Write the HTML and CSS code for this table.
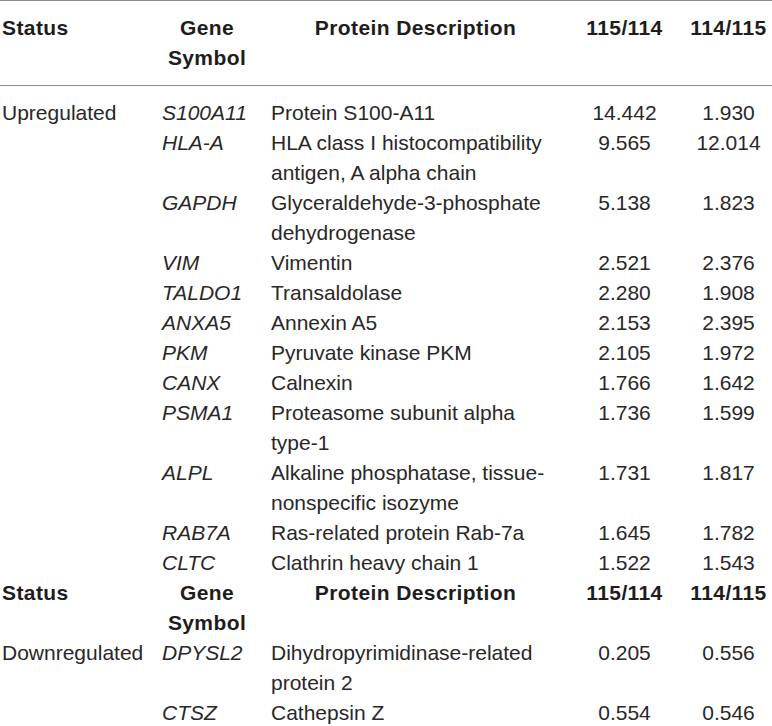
FILE: index.html
```html
<!DOCTYPE html>
<html lang="en">

<head>
  <meta charset="UTF-8" />
  <meta name="viewport" content="width=device-width, initial-scale=1.0" />
  <title>Protein Table</title>
  <link rel="stylesheet" href="styles.css">
</head>

<body>
  <table class="data-table">
    <colgroup>
      <col class="col-status">
      <col class="col-gene">
      <col class="col-desc">
      <col class="col-r1">
      <col class="col-r2">
    </colgroup>
    <thead>
      <tr>
        <th class="status">Status</th>
        <th class="gene">Gene Symbol</th>
        <th class="desc">Protein Description</th>
        <th class="num">115/114</th>
        <th class="num">114/115</th>
      </tr>
    </thead>
    <tbody>
      <tr class="first-row">
        <td class="status">Upregulated</td>
        <td class="gene">S100A11</td>
        <td class="desc">Protein S100-A11</td>
        <td class="num">14.442</td>
        <td class="num">1.930</td>
      </tr>
      <tr>
        <td class="status"></td>
        <td class="gene">HLA-A</td>
        <td class="desc">HLA class I histocompatibility antigen, A alpha chain</td>
        <td class="num">9.565</td>
        <td class="num">12.014</td>
      </tr>
      <tr>
        <td class="status"></td>
        <td class="gene">GAPDH</td>
        <td class="desc">Glyceraldehyde-3-phosphate dehydrogenase</td>
        <td class="num">5.138</td>
        <td class="num">1.823</td>
      </tr>
      <tr>
        <td class="status"></td>
        <td class="gene">VIM</td>
        <td class="desc">Vimentin</td>
        <td class="num">2.521</td>
        <td class="num">2.376</td>
      </tr>
      <tr>
        <td class="status"></td>
        <td class="gene">TALDO1</td>
        <td class="desc">Transaldolase</td>
        <td class="num">2.280</td>
        <td class="num">1.908</td>
      </tr>
      <tr>
        <td class="status"></td>
        <td class="gene">ANXA5</td>
        <td class="desc">Annexin A5</td>
        <td class="num">2.153</td>
        <td class="num">2.395</td>
      </tr>
      <tr>
        <td class="status"></td>
        <td class="gene">PKM</td>
        <td class="desc">Pyruvate kinase PKM</td>
        <td class="num">2.105</td>
        <td class="num">1.972</td>
      </tr>
      <tr>
        <td class="status"></td>
        <td class="gene">CANX</td>
        <td class="desc">Calnexin</td>
        <td class="num">1.766</td>
        <td class="num">1.642</td>
      </tr>
      <tr>
        <td class="status"></td>
        <td class="gene">PSMA1</td>
        <td class="desc">Proteasome subunit alpha type-1</td>
        <td class="num">1.736</td>
        <td class="num">1.599</td>
      </tr>
      <tr>
        <td class="status"></td>
        <td class="gene">ALPL</td>
        <td class="desc">Alkaline phosphatase, tissue-nonspecific isozyme</td>
        <td class="num">1.731</td>
        <td class="num">1.817</td>
      </tr>
      <tr>
        <td class="status"></td>
        <td class="gene">RAB7A</td>
        <td class="desc">Ras-related protein Rab-7a</td>
        <td class="num">1.645</td>
        <td class="num">1.782</td>
      </tr>
      <tr>
        <td class="status"></td>
        <td class="gene">CLTC</td>
        <td class="desc">Clathrin heavy chain 1</td>
        <td class="num">1.522</td>
        <td class="num">1.543</td>
      </tr>
      <!-- second header for the downregulated group -->
      <tr class="sub-head">
        <th class="status">Status</th>
        <th class="gene">Gene Symbol</th>
        <th class="desc">Protein Description</th>
        <th class="num">115/114</th>
        <th class="num">114/115</th>
      </tr>
      <tr>
        <td class="status">Downregulated</td>
        <td class="gene">DPYSL2</td>
        <td class="desc">Dihydropyrimidinase-related protein 2</td>
        <td class="num">0.205</td>
        <td class="num">0.556</td>
      </tr>
      <tr>
        <td class="status"></td>
        <td class="gene">CTSZ</td>
        <td class="desc">Cathepsin Z</td>
        <td class="num">0.554</td>
        <td class="num">0.546</td>
      </tr>
    </tbody>
  </table>
</body>

</html>
```

FILE: styles.css
```css
/* Basic page styling */
body {
  margin: 0;
  font-family: "Liberation Sans", Arial, sans-serif;
  font-size: 21px;
  line-height: 30px;
  color: #2a2728;
  background-color: #fff;
}

/* Table */
.data-table {
  width: 772px;
  border-collapse: collapse;
  table-layout: fixed;
  border-top: 1px solid #8c8c8c;
}

.col-status { width: 156px; }
.col-gene { width: 102px; }
.col-desc { width: 306px; }
.col-r1 { width: 121px; }
.col-r2 { width: 87px; }

th,
td {
  padding: 0;
  vertical-align: top;
  font-weight: normal;
}

th {
  font-weight: bold;
  text-align: center;
  color: #1f1c1d;
  letter-spacing: 0.4px;
}

thead th {
  padding-top: 12px;
  padding-bottom: 12px;
  border-bottom: 1px solid #8c8c8c;
}

.first-row td {
  padding-top: 12px;
}

/* Columns */
.status {
  text-align: left;
  padding-left: 2px;
}

th.status {
  text-align: left;
}

td.gene {
  font-style: italic;
  padding-left: 6px;
}

.desc {
  padding-left: 13px;
  padding-right: 4px;
}

.num {
  text-align: center;
}
```
